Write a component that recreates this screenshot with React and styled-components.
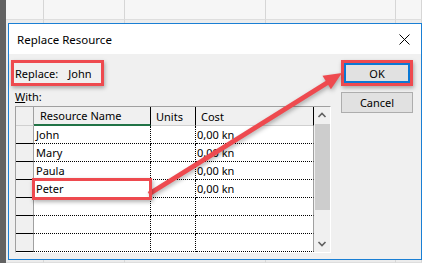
import React from "react";
import styled, { createGlobalStyle } from "styled-components";

const GlobalStyle = createGlobalStyle`
  body {
    margin: 0;
    font-family: "Noto Sans", "Liberation Sans", sans-serif;
    font-size: 11px;
    color: #000;
  }
`;

const RED = "#ee4a4f";

const Page = styled.div`
  position: relative;
  width: 422px;
  height: 263px;
  overflow: hidden;
  background: #f2f2f2;
`;

const Sheet = styled.div`
  display: grid;
  grid-template-columns: 6px 38px 81px 141px 130px 1fr;
  grid-template-rows: 20px 1fr;
  height: 100%;
`;

const SheetCell = styled.div`
  border-right: 1px solid #d6d6d6;
  border-bottom: 1px solid #dedede;
  background: ${(p) => (p.$top ? "#f6f6f6" : "#ececec")};
`;

const Strip = styled.div`
  grid-row: 1 / 3;
  background: #626262;
`;

const Dialog = styled.div`
  position: absolute;
  left: 8px;
  top: 23px;
  width: 414px;
  height: 237px;
  box-sizing: border-box;
  border: 1px solid #1a7fd4;
  background: #f0f0f0;
  display: flex;
  flex-direction: column;
`;

const TitleBar = styled.div`
  height: 30px;
  background: #fff;
  display: flex;
  align-items: center;
  justify-content: space-between;
  padding: 0 11px 0 8px;
`;

const Title = styled.span`
  font-size: 11.5px;
`;

const Close = styled.svg`
  width: 11px;
  height: 11px;
`;

const Body = styled.div`
  flex: 1;
  display: flex;
  gap: 10px;
  padding: 6px 8px 0 6px;
`;

const MainColumn = styled.div`
  width: 316px;
  display: flex;
  flex-direction: column;
`;

const Highlight = styled.div`
  display: flex;
  align-items: center;
  gap: 10px;
  height: 20px;
  width: 86px;
  margin-left: -4px;
  padding-left: 1px;
  border: 3px solid ${RED};
  box-shadow: 1px 2px 4px rgba(0, 0, 0, 0.3);
`;

const WithLabel = styled.div`
  height: 16px;
  margin-top: 4px;
  line-height: 14px;
  & u {
    text-decoration: underline;
  }
`;

const Table = styled.div`
  display: flex;
  border-top: 1px solid #a0a0a0;
  border-left: 1px solid #a0a0a0;
  border-right: 1px solid #fff;
  border-bottom: 1px solid #fff;
`;

const Cells = styled.div`
  display: grid;
  grid-template-columns: 18px 117px 45px 118px;
  grid-template-rows: 19px repeat(7, 18px);
`;

const Cell = styled.div`
  position: relative;
  box-sizing: border-box;
  display: flex;
  align-items: center;
  padding-left: ${(p) => (p.$pad ? p.$pad : 2)}px;
  white-space: nowrap;
  background: ${(p) => (p.$head ? "#f0f0f0" : "#fff")};
  border-right: ${(p) => p.$right || "1px dotted #000"};
  border-bottom: ${(p) => p.$bottom || "1px dotted #000"};
`;

const PeterMark = styled.div`
  position: absolute;
  z-index: 2;
  left: -2px;
  top: -2px;
  right: -2px;
  bottom: -3px;
  border: 3px solid ${RED};
  box-shadow: 1px 2px 4px rgba(0, 0, 0, 0.3);
`;

const Scrollbar = styled.div`
  width: 16px;
  display: flex;
  flex-direction: column;
  align-items: center;
  background: #f0f0f0;
`;

const ScrollArrow = styled.svg`
  width: 16px;
  height: 17px;
`;

const Thumb = styled.div`
  width: 15px;
  height: 86px;
  background: #cdcdcd;
`;

const Track = styled.div`
  flex: 1;
`;

const ButtonColumn = styled.div`
  width: 72px;
  display: flex;
  flex-direction: column;
  gap: 6px;
`;

const FocusMark = styled.div`
  border: 3px solid ${RED};
  box-shadow: 1px 2px 4px rgba(0, 0, 0, 0.3);
`;

const Button = styled.div`
  box-sizing: border-box;
  height: ${(p) => (p.$primary ? 20 : 21)}px;
  display: flex;
  align-items: center;
  justify-content: center;
  background: #e1e1e1;
  border: ${(p) => (p.$primary ? "2px solid #0a78d4" : "1px solid #adadad")};
`;

const Overlay = styled.svg`
  position: absolute;
  left: 0;
  top: 0;
  width: 422px;
  height: 263px;
  pointer-events: none;
  filter: drop-shadow(1px 2px 2px rgba(0, 0, 0, 0.3));
`;

const rows = [
  ["John", "0,00 kn"],
  ["Mary", "0,00 kn"],
  ["Paula", "0,00 kn"],
  ["Peter", "0,00 kn"],
  ["", ""],
  ["", ""],
  ["", ""],
];

export default function App() {
  return (
    <Page>
      <GlobalStyle />
      <Sheet>
        <Strip />
        {[0, 1, 2, 3, 4].map((i) => (
          <SheetCell key={"t" + i} $top />
        ))}
        {[0, 1, 2, 3, 4].map((i) => (
          <SheetCell key={"b" + i} />
        ))}
      </Sheet>

      <Dialog>
        <TitleBar>
          <Title>Replace Resource</Title>
          <Close viewBox="0 0 11 11">
            <path d="M0.5 0.5L10.5 10.5M10.5 0.5L0.5 10.5" stroke="#000" strokeWidth="1" />
          </Close>
        </TitleBar>
        <Body>
          <MainColumn>
            <Highlight>
              <span>Replace:</span>
              <span>John</span>
            </Highlight>
            <WithLabel>
              <u>W</u>ith:
            </WithLabel>
            <Table>
              <Cells>
                <Cell $head $right="1px solid #a0a0a0" $bottom="1px solid #d0d0d0" />
                <Cell $head $pad={6} $right="1px solid #000" $bottom="2px solid #217346">
                  Resource Name
                </Cell>
                <Cell $head $pad={5} $right="1px solid #000" $bottom="1px solid #d0d0d0">
                  Units
                </Cell>
                <Cell $head $pad={5} $right="1px solid #000" $bottom="1px solid #d0d0d0">
                  Cost
                </Cell>
                {rows.map(([name, cost], i) => (
                  <React.Fragment key={i}>
                    <Cell $head $right="1px solid #a0a0a0" $bottom="1px solid #000" />
                    <Cell>
                      {name}
                      {name === "Peter" && <PeterMark />}
                    </Cell>
                    <Cell />
                    <Cell $pad={1} $right="1px solid #a0a0a0">{cost}</Cell>
                  </React.Fragment>
                ))}
              </Cells>
              <Scrollbar>
                <ScrollArrow viewBox="0 0 16 17">
                  <path d="M4.5 10L8 6.5L11.5 10" fill="none" stroke="#606060" strokeWidth="1.6" />
                </ScrollArrow>
                <Thumb />
                <Track />
                <ScrollArrow viewBox="0 0 16 17">
                  <path d="M4.5 7L8 10.5L11.5 7" fill="none" stroke="#606060" strokeWidth="1.6" />
                </ScrollArrow>
              </Scrollbar>
            </Table>
          </MainColumn>
          <ButtonColumn>
            <FocusMark>
              <Button $primary>OK</Button>
            </FocusMark>
            <Button>Cancel</Button>
          </ButtonColumn>
        </Body>
      </Dialog>

      <Overlay viewBox="0 0 422 263">
        <line x1="149" y1="194" x2="330" y2="81" stroke={RED} strokeWidth="5" />
        <polygon points="342,73 322.5,75.7 330.9,89.3" fill={RED} />
      </Overlay>
    </Page>
  );
}
